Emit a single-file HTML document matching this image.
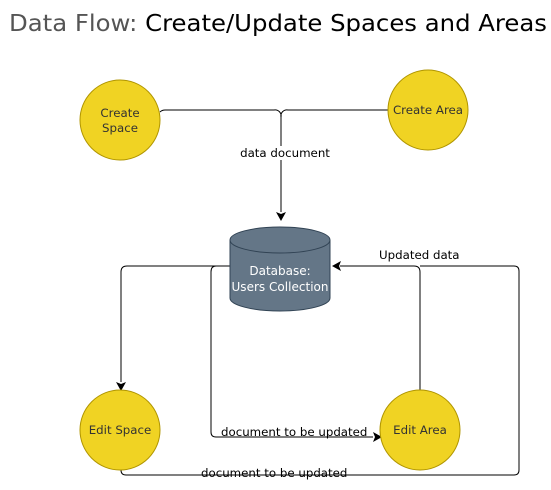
<!DOCTYPE html>
<html><head><style>
body{margin:0;background:#fff;width:551px;height:490px;overflow:hidden}
svg{display:block}
</style></head><body>
<svg width="551" height="490" xmlns="http://www.w3.org/2000/svg" font-family="DejaVu Sans, sans-serif">
<text x="9" y="31" font-size="23" fill="#555" textLength="538" lengthAdjust="spacingAndGlyphs">Data Flow: <tspan fill="#000">Create/Update Spaces and Areas</tspan></text>
<g fill="none" stroke="#000" stroke-width="1">
<path d="M160 112 Q162 110 165 110 L274 110 A6 6 0 0 1 281 117 L281 212"/>
<path d="M388 110 L288 110 A6 6 0 0 0 281 117"/>
<path d="M230 266 L127 266 Q121 266 121 272 L121 382"/>
<path d="M230 266 L216 266 Q211 266 211 272 L211 432 Q211 437 216 437 L373 437"/>
<path d="M420 390 L420 272 Q420 266 414 266 L340 266"/>
<path d="M121 470 Q121 475 126 475 L514 475 Q519 475 519 470 L519 271 Q519 266 514 266 L420 266"/>
</g>
<g fill="#000">
<path d="M276 212 L281 221 L286 212 L281 214Z"/>
<path d="M116 382 L121 391 L126 382 L121 384Z"/>
<path d="M373 432 L382 437 L373 442 L375 437Z"/>
<path d="M341 261 L332 266 L341 271 L339 266Z"/>
</g>
<rect x="235" y="146" width="102" height="14" fill="#fff"/>
<text x="285" y="157" font-size="11.8" text-anchor="middle">data document</text>
<path d="M230 240 L230 298 A50 13 0 0 0 330 298 L330 240" fill="#647687" stroke="#314354"/>
<ellipse cx="280" cy="240" rx="50" ry="13" fill="#647687" stroke="#314354"/>
<text x="280" y="275" font-size="12" fill="#fff" text-anchor="middle">Database:</text>
<text x="280" y="291" font-size="12" fill="#fff" text-anchor="middle" textLength="97">Users Collection</text>
<g fill="#f0d323" stroke="#b09500">
<circle cx="120" cy="120" r="40"/>
<circle cx="428" cy="110" r="40"/>
<circle cx="120" cy="430" r="40"/>
<circle cx="420" cy="430" r="40"/>
</g>
<g font-size="11.8" fill="#333" text-anchor="middle">
<text x="120" y="117">Create</text><text x="120" y="132">Space</text>
<text x="428" y="114">Create Area</text>
<text x="120" y="434">Edit Space</text>
<text x="420" y="434">Edit Area</text>
</g>
<g font-size="11.8" fill="#000">
<text x="379" y="259">Updated data</text>
<text x="221" y="436">document to be updated</text>
<text x="201" y="477">document to be updated</text>
</g>
</svg>
</body></html>
